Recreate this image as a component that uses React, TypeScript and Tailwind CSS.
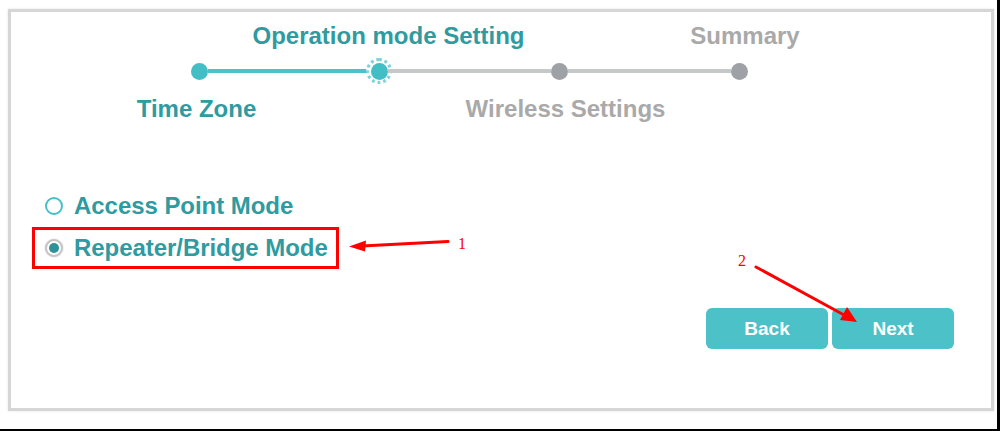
import React from 'react';

type Step = {
  label: string;
  above: boolean;
  state: 'done' | 'current' | 'todo';
  shift?: string;
};

const steps: Step[] = [
  { label: 'Time Zone', above: false, state: 'done', shift: 'pr-[5px]' },
  { label: 'Operation mode Setting', above: true, state: 'current', shift: 'pl-[19px]' },
  { label: 'Wireless Settings', above: false, state: 'todo', shift: 'pl-[13px]' },
  { label: 'Summary', above: true, state: 'todo', shift: 'pl-[12px]' },
];

const font = { fontFamily: '"Liberation Sans", Arial, sans-serif' };

const StepLabel = ({ step }: { step: Step }) => (
  <div
    className={`h-[28px] leading-[28px] text-[24px] font-bold whitespace-nowrap flex justify-center ${step.shift ?? ''} ${
      step.state === 'todo' ? 'text-[#a9a9a9]' : 'text-[#2f9ba0]'
    }`}>
    {step.label}
  </div>
);

const Stepper = () => (
  <div className="ml-[98px] w-[720px] grid grid-cols-4 pt-[10px]">
    {steps.map((step, i) => {
      const leftColor = i === 0 ? 'bg-transparent' : steps[i].state === 'todo' ? 'bg-[#c6c7c9]' : 'bg-[#4cc1c7]';
      const rightColor =
        i === steps.length - 1 ? 'bg-transparent' : steps[i + 1].state === 'todo' ? 'bg-[#c6c7c9]' : 'bg-[#4cc1c7]';
      return (
        <div key={step.label} className="flex flex-col">
          {step.above ? <StepLabel step={step} /> : <div className="h-[28px]" />}
          <div className="mt-[9px] h-[24px] flex items-center">
            <div className={`flex-1 h-[4px] ${leftColor}`} />
            <div className="w-[17px] h-[17px] flex items-center justify-center shrink-0">
              {step.state === 'current' ? (
                <div className="shrink-0 w-[26px] h-[26px] rounded-full border-[3px] border-dotted border-[#7fd2d7] bg-white flex items-center justify-center">
                  <div className="w-[17px] h-[17px] rounded-full bg-[#44bec5]" />
                </div>
              ) : (
                <div
                  className={`shrink-0 w-[17px] h-[17px] rounded-full ${
                    step.state === 'done' ? 'bg-[#44bec5]' : 'bg-[#9ea1a6]'
                  }`}
                />
              )}
            </div>
            <div className={`flex-1 h-[4px] ${rightColor}`} />
          </div>
          <div className="mt-[12px]">{step.above ? <div className="h-[28px]" /> : <StepLabel step={step} />}</div>
        </div>
      );
    })}
  </div>
);

const ModeOption = ({ label, checked, highlight }: { label: string; checked: boolean; highlight?: boolean }) => (
  <div
    className={`h-[42px] inline-flex items-center gap-[11px] pl-[10px] pr-[8px] border-[3px] ${
      highlight ? 'border-[#ff0000]' : 'border-transparent'
    }`}>
    {checked ? (
      <div className="w-[18px] h-[18px] rounded-full border-[2px] border-[#c4c4c4] bg-white flex items-center justify-center shadow-[0_0_2px_#d0d0d0]">
        <div className="w-[10px] h-[10px] rounded-full bg-[#2d929a]" />
      </div>
    ) : (
      <div className="w-[18px] h-[18px] rounded-full border-[2.5px] border-[#48bfc6] bg-white" />
    )}
    <span className="text-[24px] font-bold text-[#2f9ba0] leading-none whitespace-nowrap tracking-[-0.05px]">
      {label}
    </span>
  </div>
);

const Annotations = () => (
  <svg className="absolute inset-0 pointer-events-none" width={1000} height={431} viewBox="0 0 1000 431">
    <line x1={448} y1={241.5} x2={362} y2={246} stroke="#ff0000" strokeWidth={3} strokeLinecap="round" />
    <polygon points="349,246.5 366,240.5 365,251.5" fill="#ff0000" />
    <text x={458} y={248.5} fill="#ff0000" fontSize={16} style={{ fontFamily: '"Liberation Serif", serif' }}>
      1
    </text>
    <line x1={756} y1={267} x2={845} y2={315.5} stroke="#ff0000" strokeWidth={3} strokeLinecap="round" />
    <polygon points="857,322 840,320 847,307" fill="#ff0000" />
    <text x={738} y={266} fill="#ff0000" fontSize={16} style={{ fontFamily: '"Liberation Serif", serif' }}>
      2
    </text>
  </svg>
);

export default function App() {
  return (
    <div
      className="relative w-[1000px] h-[431px] bg-white border-r-[3px] border-b-[2px] border-black pt-[9px] pl-[8px]"
      style={font}>
      <div className="w-[986px] h-[402px] border-[3px] border-[#d6d6d6] shadow-[0_0_2px_#e0e0e0] bg-white flex flex-col">
        <Stepper />
        <div className="mt-[62px] ml-[21px] flex flex-col items-start">
          <ModeOption label="Access Point Mode" checked={false} />
          <ModeOption label="Repeater/Bridge Mode" checked highlight />
        </div>
        <div className="mt-[39px] mr-[37px] flex justify-end gap-[4px]">
          <button className="w-[122px] h-[41px] pt-[2px] rounded-[6px] bg-[#4cc1c8] text-white text-[19px] font-bold">
            Back
          </button>
          <button className="w-[122px] h-[41px] pt-[2px] rounded-[6px] bg-[#4cc1c8] text-white text-[19px] font-bold">
            Next
          </button>
        </div>
      </div>
      <Annotations />
    </div>
  );
}
